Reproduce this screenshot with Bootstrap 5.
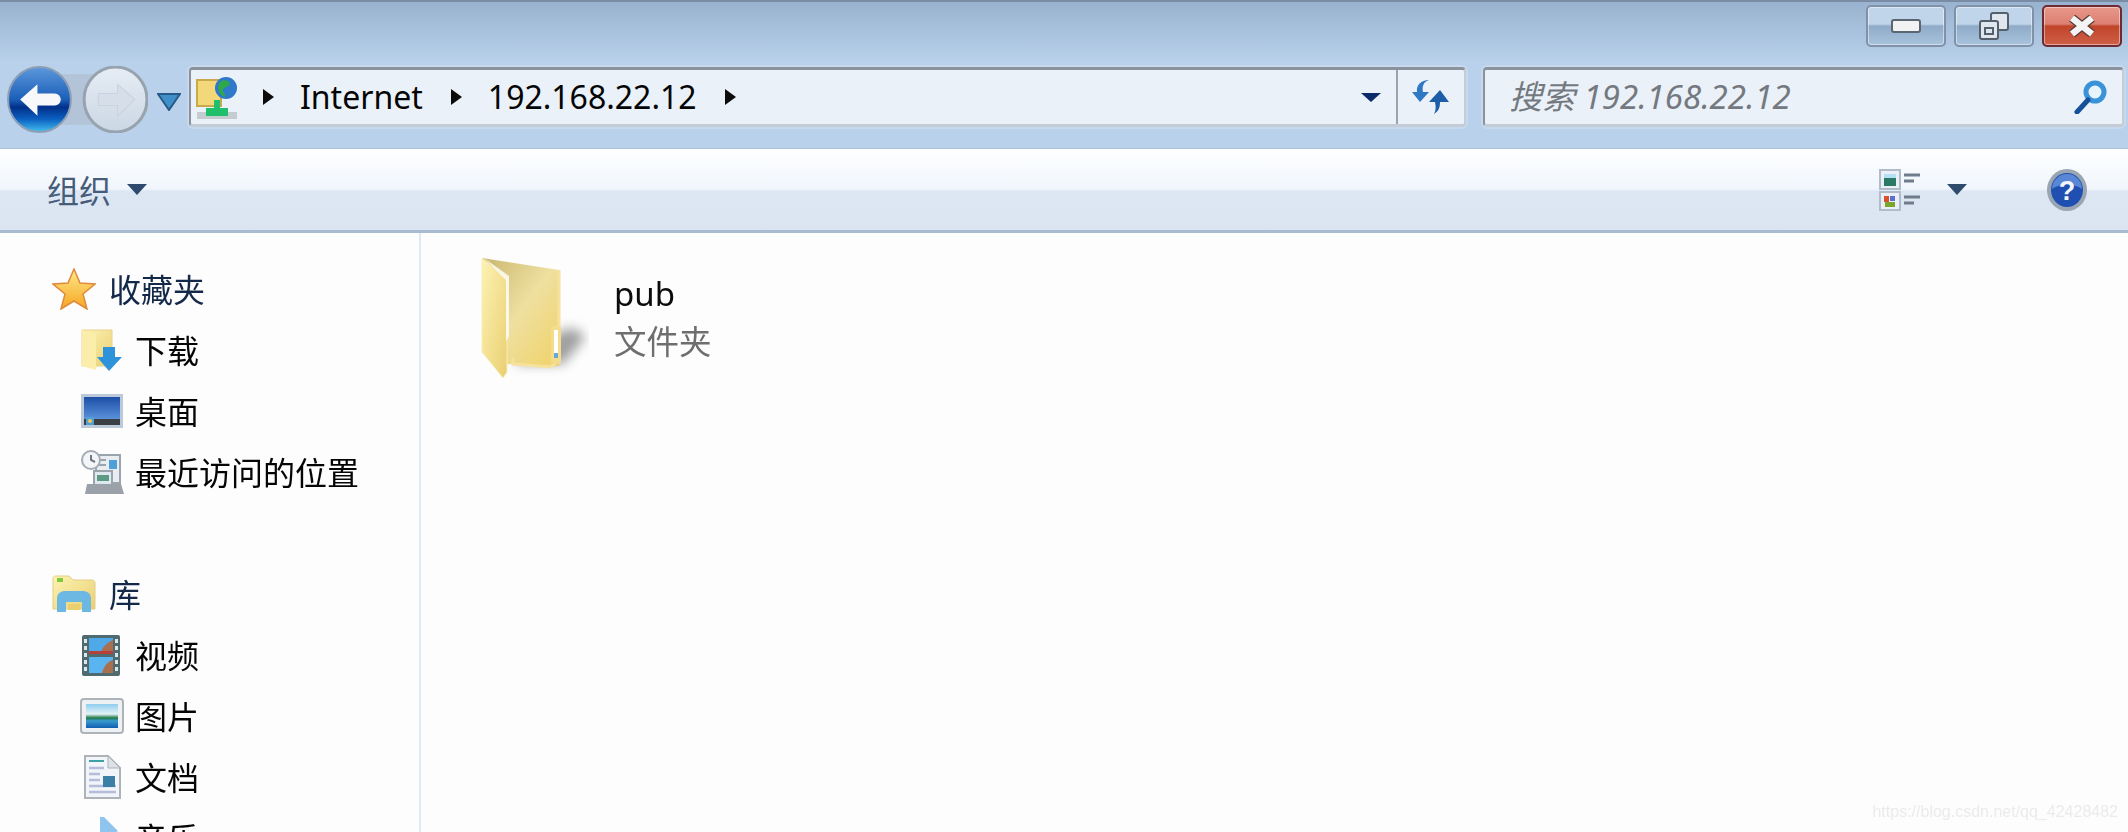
<!DOCTYPE html>
<html lang="zh-CN">
<head>
  <meta charset="UTF-8">
  <meta name="viewport" content="width=device-width, initial-scale=1">
  <title>192.168.22.12</title>
  <link href="https://cdn.jsdelivr.net/npm/bootstrap@5.3.2/dist/css/bootstrap.min.css" rel="stylesheet">
  <style>
    html, body { height: 100%; overflow: hidden; background: #fdfdfd; }
    body { font-family: "Noto Sans", "Noto Sans CJK SC", sans-serif; color: #1c1c1c; }
    .explorer { height: 832px; width: 2128px; filter: blur(.7px); }
    .defs-holder { width: 0; height: 0; position: absolute; }

    .chrome-top { height: 150px; border-top: 2px solid #7a8ca3; background: linear-gradient(#98b2cf, #b9d1ea 60px); border-bottom: 2px solid #a9c2dc; }
    .win-btns { height: 47px; padding: 3px 6px 0 0; gap: 8px; }
    .win-btn { width: 80px; height: 42px; border: 2px solid #7f92a9; border-radius: 5px; background: linear-gradient(#c1d5ea 0 45%, #8fabc8 50%, #a9c3dd 100%); box-shadow: inset 0 0 0 1px rgba(255,255,255,.45); }
    .win-btn.closer { border-color: #6d2a33; background: linear-gradient(#e8978a 0, #dc8072 45%, #c0452a 50%, #cf5f48 100%); }

    .nav-row { height: 80px; padding: 18px 4px 0 7px; }
    .nav-round { width: 141px; height: 67px; margin-top: -1px; }
    .drop-mini { width: 24px; height: 18px; margin: 26px 8px 0 9px; }
    .field { height: 60px; border: 3px solid #8a929c; border-bottom: 3px solid #c4ccd6; border-left-width: 2px; border-right: 2px solid #c4ccd6; border-radius: 4px; background: #eaf1f9; box-shadow: 0 0 0 2px #c6d9ee; }
    .addr-field { width: 1277px; margin-left: 0; padding-left: 5px; font-size: 32px; color: #050505; }
    .addr-icon { width: 42px; margin-right: 25px; }
    .crumb-arrow { width: 0; height: 0; border-top: 8px solid transparent; border-bottom: 8px solid transparent; border-left: 11px solid #0c0c0c; }
    .crumb-text { margin-left: 26px; margin-right: 28px; line-height: 1; }
    .addr-drop { margin-right: 15px; width: 0; height: 0; border-left: 10px solid transparent; border-right: 10px solid transparent; border-top: 9px solid #0a2a6a; }
    .refresh-cell { width: 68px; height: 100%; border-left: 2px solid #9aa3ae; }
    .search-field { width: 642px; margin-left: 17px; padding: 0 14px 0 24px; font-size: 33px; font-style: italic; color: #74797f; }

    .toolbar-strip { height: 84px; background: linear-gradient(#fff, #f0f6fc 40px, #dde7f4 42px, #dbe5f2); border-bottom: 3px solid #a9bbd0; padding: 0 40px 0 47px; margin-top: -1px; }
    .org-label { font-size: 32px; color: #465c79; line-height: 1; padding-top: 2px; }
    .tri-dark { width: 0; height: 0; border-left: 10px solid transparent; border-right: 10px solid transparent; border-top: 11px solid #2e4a6c; }

    .main-pane { height: 600px; }
    .side-pane { width: 421px; padding-top: 25px; border-right: 2px solid #e0e8f2; }
    .side-head { height: 61px; padding-left: 52px; font-size: 32px; color: #14294a; }
    .side-head svg { width: 44px; margin-right: 13px; }
    .side-item { height: 61px; padding-left: 80px; font-size: 32px; color: #050505; }
    .side-item svg { width: 44px; margin-right: 11px; }
    .side-head span, .side-item span { padding-top: 2px; }
    .side-gap { height: 61px; }
    .file-pane { padding: 23px 0 0 58px; }
    .big-folder { width: 110px; margin-right: 25px; }
    .file-name { font-size: 33px; line-height: 40px; margin-top: 18px; color: #0c0c0c; }
    .file-kind { font-size: 32.5px; line-height: 40px; color: #6e6e6e; margin-top: 8px; }
    .watermark { position: absolute; right: 10px; bottom: 8px; font-family: "Liberation Sans", sans-serif; font-size: 16px; color: #ebebeb; }
  </style>
</head>
<body>
  <svg class="defs-holder" aria-hidden="true">
    <defs>
      <linearGradient id="gFolder" x1="0" y1="0" x2="1" y2="1"><stop offset="0" stop-color="#fdf3b4"/><stop offset="1" stop-color="#e9cf72"/></linearGradient>
      <linearGradient id="gInner" x1="0" y1="0" x2="1" y2="1"><stop offset="0" stop-color="#c9b66f"/><stop offset=".5" stop-color="#efe0a0"/><stop offset="1" stop-color="#f0d268"/></linearGradient>
      <linearGradient id="gBack" x1="0" y1="0" x2="0" y2="1"><stop offset="0" stop-color="#5c98dc"/><stop offset=".5" stop-color="#1c5fb8"/><stop offset=".62" stop-color="#02308a"/><stop offset=".8" stop-color="#0b5fc0"/><stop offset="1" stop-color="#43c0f0"/></linearGradient>
      <linearGradient id="gFwd" x1="0" y1="0" x2="0" y2="1"><stop offset="0" stop-color="#e6edf5"/><stop offset="1" stop-color="#cbd7e4"/></linearGradient>
      <linearGradient id="gStar" x1="0" y1="0" x2="0" y2="1"><stop offset="0" stop-color="#ffe98a"/><stop offset="1" stop-color="#f5a623"/></linearGradient>
      <linearGradient id="gDesk" x1="0" y1="0" x2="0" y2="1"><stop offset="0" stop-color="#1d4fa6"/><stop offset="1" stop-color="#5c94dd"/></linearGradient>
      <linearGradient id="gPic" x1="0" y1="0" x2="0" y2="1"><stop offset="0" stop-color="#8fcdf0"/><stop offset=".42" stop-color="#e4f2f6"/><stop offset=".58" stop-color="#1f7a45"/><stop offset=".7" stop-color="#3a9ad0"/><stop offset="1" stop-color="#0f5fb0"/></linearGradient>
      <filter id="fShadow" x="-50%" y="-50%" width="200%" height="200%"><feGaussianBlur stdDeviation="6"/></filter>
    </defs>
  </svg>

  <div class="explorer position-relative overflow-hidden">
    <div class="chrome-top">
      <div class="win-btns d-flex justify-content-end">
        <div class="win-btn d-flex align-items-center justify-content-center">
          <svg width="30" height="14" viewBox="0 0 30 14"><rect x="1" y="1" width="28" height="12" rx="2" fill="#f2f2f2" stroke="#5b6673" stroke-width="2"/></svg>
        </div>
        <div class="win-btn d-flex align-items-center justify-content-center">
          <svg width="32" height="28" viewBox="0 0 32 28"><rect x="13" y="1" width="17" height="17" rx="2" fill="#dfe6ee" stroke="#55606d" stroke-width="2"/><rect x="2" y="9" width="18" height="18" rx="2" fill="#dfe6ee" stroke="#55606d" stroke-width="2"/><rect x="7" y="16" width="8" height="6" fill="none" stroke="#55606d" stroke-width="2"/></svg>
        </div>
        <div class="win-btn closer d-flex align-items-center justify-content-center">
          <svg width="30" height="22" viewBox="0 0 30 22"><path d="M5 3 25 19M25 3 5 19" stroke="#5a3a38" stroke-width="9"/><path d="M5 3 25 19M25 3 5 19" stroke="#f4f4f4" stroke-width="6.500"/></svg>
        </div>
      </div>

      <div class="nav-row d-flex align-items-start">
        <svg class="nav-round flex-shrink-0" viewBox="0 0 139 66">
          <rect x="50" y="8" width="40" height="50" fill="#b3c4d8"/>
          <ellipse cx="32" cy="33" rx="31" ry="32" fill="url(#gBack)" stroke="#8d9fb5" stroke-width="2"/>
          <path d="M13 33 30 18V27H47A6 6 0 0 1 47 39H30V49Z" fill="#f7f8fa"/>
          <ellipse cx="107" cy="33" rx="31" ry="32" fill="url(#gFwd)" stroke="#98a3b0" stroke-width="3"/>
          <path d="M126 33 109 18V27H90V39H109V49Z" fill="#d5dee9" stroke="#c8d3df"/>
        </svg>
        <svg class="drop-mini flex-shrink-0" viewBox="0 0 24 18"><path d="M1 1H23L12 17Z" fill="#3f8fc8" stroke="#285a88" stroke-width="2"/></svg>
        <div class="field addr-field d-flex align-items-center flex-shrink-0">
          <svg class="addr-icon flex-shrink-0" viewBox="0 0 42 44" height="44">
            <rect x="1" y="5" width="24" height="26" fill="#f2d878" stroke="#c9a94c" stroke-width="2"/>
            <rect x="1" y="37" width="40" height="7" fill="#c5ccd0"/>
            <rect x="10" y="33" width="22" height="8" fill="#1fbf6c"/>
            <rect x="18" y="25" width="6" height="10" fill="#1fbf6c"/>
            <circle cx="30" cy="13" r="11" fill="#2e79c9"/>
            <path d="M24 7c4-3 9-2 10 2-2 4-6 2-7 6 0 3 3 4 2 7-4-1-6-5-7-9 0-2 1-4 2-6Z" fill="#2ea84a"/>
          </svg>
          <span class="crumb-arrow"></span>
          <span class="crumb-text">Internet</span>
          <span class="crumb-arrow"></span>
          <span class="crumb-text">192.168.22.12</span>
          <span class="crumb-arrow"></span>
          <span class="addr-drop ms-auto"></span>
          <span class="refresh-cell d-flex align-items-center justify-content-center">
            <svg width="40" height="36" viewBox="0 0 40 36"><path d="M18 1C12 3 11 8 12 13H18L9 23 1 13H6C5 6 10 1 18 1Z" fill="#2f78c4"/><path d="M23 35C28 32 29 28 29 23H38L29 11 18 23H24C25 28 25 31 23 35Z" fill="#1d5ea8"/></svg>
          </span>
        </div>
        <div class="field search-field d-flex align-items-center justify-content-between flex-grow-1">
          <span>搜索 192.168.22.12</span>
          <svg width="34" height="34" viewBox="0 0 34 34"><circle cx="21" cy="12" r="9" fill="#e8f4fc" stroke="#3a93d8" stroke-width="5"/><path d="M14 20 3 32" stroke="#17509a" stroke-width="5" stroke-linecap="round"/></svg>
        </div>
      </div>
    </div>

    <div class="toolbar-strip d-flex align-items-center">
      <span class="org-label">组织</span>
      <span class="tri-dark ms-3"></span>
      <svg class="ms-auto" width="42" height="42" viewBox="0 0 42 42">
        <rect x="1" y="1" width="20" height="19" fill="#eaf0f6" stroke="#b0bcc9" stroke-width="2"/>
        <rect x="5" y="9" width="12" height="8" fill="#2a7a66"/><rect x="5" y="5" width="12" height="4" fill="#b6e0f5"/>
        <rect x="1" y="23" width="20" height="18" fill="#eaf0f6" stroke="#b0bcc9" stroke-width="2"/>
        <rect x="5" y="27" width="5" height="6" fill="#d9532c"/><rect x="11" y="27" width="5" height="5" fill="#5a6fd0"/><rect x="6" y="33" width="10" height="5" fill="#7ba62d"/>
        <path d="M25 6H41M25 12H35M25 28H41M25 34H35" stroke="#6f7c8c" stroke-width="3"/>
      </svg>
      <span class="tri-dark" style="margin-left:26px;margin-right:79px"></span>
      <svg width="42" height="42" viewBox="0 0 42 42"><ellipse cx="21" cy="21" rx="20" ry="21" fill="#9aa5b2"/><ellipse cx="21" cy="21" rx="16" ry="17" fill="#1f4fb0"/><path d="M6 20A15 15 0 0 1 36 20C28 14 14 14 6 20Z" fill="#5a86d6"/><text x="21" y="31" text-anchor="middle" font-family="Liberation Sans, sans-serif" font-weight="700" font-size="27" fill="#f2f5fa">?</text></svg>
    </div>

    <div class="main-pane d-flex">
      <div class="side-pane flex-shrink-0">
        <div class="side-head d-flex align-items-center">
          <svg viewBox="0 0 44 42" height="42"><path d="M22 1 28 15 43 16 31 26 35 41 22 33 9 41 13 26 1 16 16 15Z" fill="url(#gStar)" stroke="#e08a3c" stroke-width="1.500"/></svg>
          <span>收藏夹</span>
        </div>
        <div class="side-item d-flex align-items-center">
          <svg viewBox="0 0 44 44" height="44"><path d="M2 2H32V38H2Z" fill="url(#gFolder)" stroke="#e6d28a"/><path d="M2 2 16 6V42L2 38Z" fill="#fbeeaa"/><path d="M23 19H35V29H42L29 43 17 29H23Z" fill="#2f93dc"/></svg>
          <span>下载</span>
        </div>
        <div class="side-item d-flex align-items-center">
          <svg viewBox="0 0 44 36" height="36"><rect x="1" y="1" width="42" height="34" fill="#bcc9d8"/><rect x="4" y="4" width="36" height="23" fill="url(#gDesk)"/><rect x="4" y="26" width="36" height="6" fill="#3b3f44"/><rect x="6" y="24" width="8" height="8" fill="#4fa0d8"/><circle cx="10" cy="28" r="2" fill="#f2c94c"/></svg>
          <span>桌面</span>
        </div>
        <div class="side-item d-flex align-items-center">
          <svg viewBox="0 0 44 44" height="44"><rect x="16" y="5" width="24" height="28" fill="#e9edf1" stroke="#9aa4ad" stroke-width="2"/><rect x="29" y="10" width="8" height="9" fill="#4f9fd8"/><path d="M19 10H26M19 15H26" stroke="#9aa4ad" stroke-width="2"/><circle cx="11" cy="10" r="9" fill="#f3f5f7" stroke="#a4acb4" stroke-width="2"/><path d="M11 5V10L15 12" fill="none" stroke="#6e7882" stroke-width="2"/><rect x="14" y="21" width="18" height="14" fill="#dfe8ee" stroke="#9aa4ad" stroke-width="2"/><rect x="17" y="25" width="12" height="6" fill="#5d9a86"/><path d="M7 34H41L44 44H5Z" fill="#9aa1a8"/></svg>
          <span>最近访问的位置</span>
        </div>
        <div class="side-gap"></div>
        <div class="side-head d-flex align-items-center">
          <svg viewBox="0 0 44 38" height="38"><path d="M1 4C1 2 2 1 4 1H17L21 5H40C42 5 43 6 43 8V34H1Z" fill="url(#gFolder)" stroke="#e4cd82"/><rect x="5" y="3" width="6" height="4" fill="#7fc93b"/><path d="M5 37V24C5 17 10 16 14 16H30C35 16 39 18 39 24V37H30V27H14V37Z" fill="#6db7e3"/><rect x="16" y="29" width="12" height="6" fill="#e9cf72"/></svg>
          <span>库</span>
        </div>
        <div class="side-item d-flex align-items-center">
          <svg viewBox="0 0 44 42" height="42"><rect x="2" y="1" width="38" height="41" rx="2" fill="#4f6b70"/><rect x="9" y="4" width="24" height="16" fill="#4fa8e8"/><rect x="9" y="23" width="24" height="16" fill="#5ab4f0"/><path d="M20 20C22 13 28 8 33 6V20ZM22 39C24 32 28 27 33 26V39Z" fill="#a8704e"/><rect x="9" y="17" width="24" height="3" fill="#b8403c"/><path d="M5.500 5V39M36.500 5V39" stroke="#dfe6e8" stroke-width="3" stroke-dasharray="4 3"/></svg>
          <span>视频</span>
        </div>
        <div class="side-item d-flex align-items-center">
          <svg viewBox="0 0 44 36" height="36"><rect x="1" y="1" width="42" height="34" rx="3" fill="#eef1f4" stroke="#adb3b9" stroke-width="2"/><rect x="6" y="6" width="32" height="24" fill="url(#gPic)"/></svg>
          <span>图片</span>
        </div>
        <div class="side-item d-flex align-items-center">
          <svg viewBox="0 0 44 44" height="44"><path d="M5 1H28L40 13V43H5Z" fill="#f1f4f8" stroke="#adb3b9" stroke-width="2"/><path d="M28 1V13H40Z" fill="#dde2e8" stroke="#adb3b9"/><path d="M9 6H24" stroke="#3fa0a8" stroke-width="2"/><path d="M9 13H24M9 19H20M9 25H20M9 31H36M9 37H36" stroke="#b6bdd8" stroke-width="2.500"/><rect x="23" y="21" width="12" height="11" fill="#3b7fa8"/></svg>
          <span>文档</span>
        </div>
        <div class="side-item d-flex align-items-center">
          <svg viewBox="0 0 44 44" height="44"><path d="M24 1 38 15 30 20 24 18V38A8 6 0 1 1 20 32V1Z" fill="#8ec4ee"/></svg>
          <span>音乐</span>
        </div>
      </div>

      <div class="file-pane d-flex align-items-start flex-grow-1">
        <svg class="big-folder flex-shrink-0" viewBox="0 0 110 122" height="122">
          <path d="M36 108 84 108 106 82C96 68 86 72 78 78L42 96Z" fill="#777" opacity=".7" filter="url(#fShadow)"/>
          <path d="M3 2 80 14V110L27 108Z" fill="url(#gInner)"/>
          <path d="M80 14V104L72 111 34 108V102" fill="none" stroke="#f6e29c" stroke-width="3"/>
          <path d="M3 2 28 23V116L24 122 3 96Z" fill="url(#gFolder)" stroke="#f7eeb5"/>
          <path d="M5 2 30 20V80L27 85V24Z" fill="#fff" opacity=".8"/>
          <rect x="72" y="70" width="10" height="38" rx="3" fill="#f3dc8a"/>
          <rect x="75" y="74" width="4" height="24" fill="#fff"/>
          <rect x="75" y="97" width="4" height="5" fill="#6aa6d8"/>
        </svg>
        <div>
          <div class="file-name">pub</div>
          <div class="file-kind">文件夹</div>
        </div>
      </div>
    </div>

    <div class="watermark">https://blog.csdn.net/qq_42428482</div>
  </div>

  <script src="https://cdn.jsdelivr.net/npm/bootstrap@5.3.2/dist/js/bootstrap.bundle.min.js"></script>
</body>
</html>
